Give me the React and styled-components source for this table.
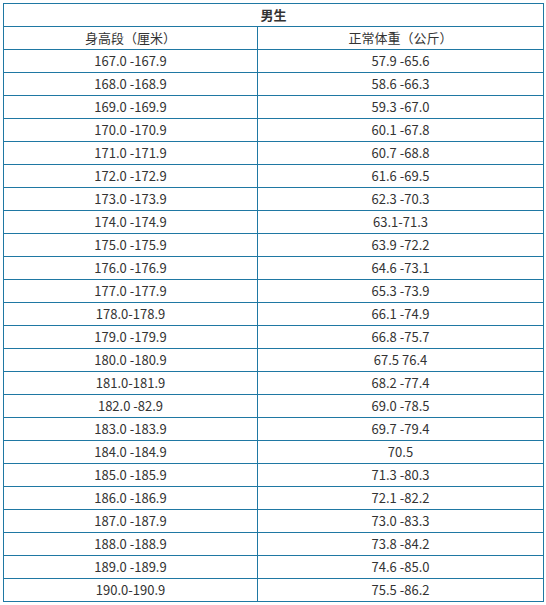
import React from 'react';
import styled, { createGlobalStyle } from 'styled-components';

const rows = [
  ['167.0 -167.9', '57.9 -65.6'],
  ['168.0 -168.9', '58.6 -66.3'],
  ['169.0 -169.9', '59.3 -67.0'],
  ['170.0 -170.9', '60.1 -67.8'],
  ['171.0 -171.9', '60.7 -68.8'],
  ['172.0 -172.9', '61.6 -69.5'],
  ['173.0 -173.9', '62.3 -70.3'],
  ['174.0 -174.9', '63.1-71.3'],
  ['175.0 -175.9', '63.9 -72.2'],
  ['176.0 -176.9', '64.6 -73.1'],
  ['177.0 -177.9', '65.3 -73.9'],
  ['178.0-178.9', '66.1 -74.9'],
  ['179.0 -179.9', '66.8 -75.7'],
  ['180.0 -180.9', '67.5 76.4'],
  ['181.0-181.9', '68.2 -77.4'],
  ['182.0 -82.9', '69.0 -78.5'],
  ['183.0 -183.9', '69.7 -79.4'],
  ['184.0 -184.9', '70.5'],
  ['185.0 -185.9', '71.3 -80.3'],
  ['186.0 -186.9', '72.1 -82.2'],
  ['187.0 -187.9', '73.0 -83.3'],
  ['188.0 -188.9', '73.8 -84.2'],
  ['189.0 -189.9', '74.6 -85.0'],
  ['190.0-190.9', '75.5 -86.2'],
];

const GlobalStyle = createGlobalStyle`
  body {
    margin: 0;
    background: #fff;
    font-family: "Noto Sans CJK SC", "Noto Sans", sans-serif;
  }
`;

const Wrapper = styled.div`
  padding: 3px;
`;

const Table = styled.table`
  width: 541px;
  border-collapse: collapse;
  table-layout: fixed;
  color: #333;
  font-size: 13px;
`;

const Cell = styled.td`
  border: 1px solid #1f78a3;
  height: 22px;
  padding: 0;
  text-align: center;
  vertical-align: middle;
  line-height: 22px;
  white-space: pre;
  font-weight: ${p => (p.bold ? 700 : 400)};
`;

export default function App() {
  return (
    <Wrapper>
      <GlobalStyle />
      <Table>
        <colgroup>
          <col style={{ width: 254 }} />
          <col />
        </colgroup>
        <tbody>
          <tr>
            <Cell colSpan={2} bold>
              男生
            </Cell>
          </tr>
          <tr>
            <Cell>身高段（厘米）</Cell>
            <Cell>正常体重（公斤）</Cell>
          </tr>
          {rows.map(([h, w]) => (
            <tr key={h}>
              <Cell>{h}</Cell>
              <Cell>{w}</Cell>
            </tr>
          ))}
        </tbody>
      </Table>
    </Wrapper>
  );
}
